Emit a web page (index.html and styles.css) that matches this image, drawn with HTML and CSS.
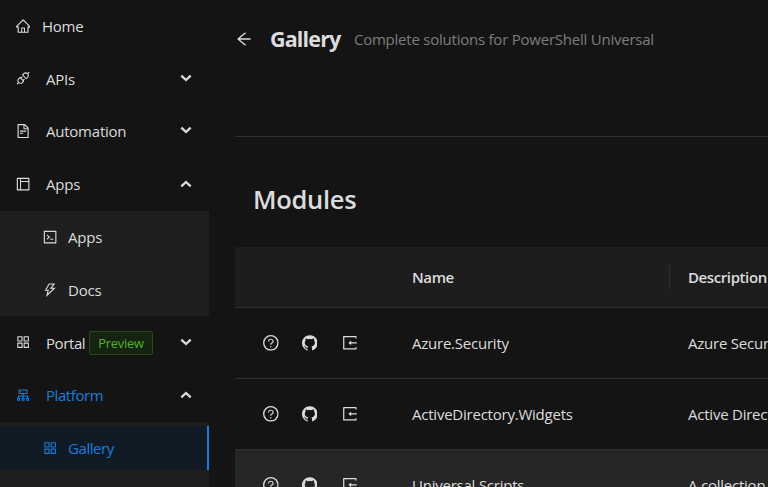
FILE: index.html
```html
<!DOCTYPE html>
<html lang="en">
<head>
<meta charset="utf-8">
<title>Gallery</title>
<link rel="stylesheet" href="styles.css">
</head>
<body>
<svg class="defs" aria-hidden="true">
  <symbol id="home" viewBox="64 64 896 896"><path d="M946.5 505L560.1 118.8l-25.9-25.9a31.5 31.5 0 00-44.4 0L77.5 505a63.9 63.9 0 00-18.8 46c.4 35.2 29.7 63.3 64.9 63.3h42.5V940h691.8V614.3h43.4c17.1 0 33.2-6.7 45.3-18.8a63.6 63.6 0 0018.7-45.3c0-17-6.7-33.1-18.8-45.2zM568 868H456V664h112v204zm217.9-325.7V868H632V640c0-22.1-17.9-40-40-40H432c-22.1 0-40 17.9-40 40v228H238.1V542.3h-96l370-369.7 23.1 23.1L882 542.3h-96.1z"/></symbol>
  <symbol id="api" viewBox="64 64 896 896"><path d="M917.7 148.8l-42.4-42.4c-1.6-1.6-3.6-2.3-5.7-2.3s-4.1.8-5.7 2.3l-76.1 76.1a199.27 199.27 0 00-112.1-34.3c-51.2 0-102.4 19.5-141.5 58.6L432.3 308.7a8.03 8.03 0 000 11.3L704 591.7c1.6 1.6 3.6 2.3 5.7 2.3 2 0 4.1-.8 5.7-2.3l101.9-101.9c68.9-69 77-175.7 24.3-253.5l76.1-76.1c3.1-3.2 3.1-8.3 0-11.4zM769.1 441.7l-59.4 59.4-186.8-186.8 59.4-59.4c24.9-24.9 58.1-38.7 93.4-38.7 35.3 0 68.4 13.7 93.4 38.7 24.9 24.9 38.7 58.1 38.7 93.4 0 35.3-13.8 68.4-38.7 93.4zm-190.2 105a8.03 8.03 0 00-11.3 0L501 613.3 410.7 523l66.7-66.7c3.1-3.1 3.1-8.2 0-11.3L441 408.6a8.03 8.03 0 00-11.3 0L363 475.3l-43-43a7.85 7.85 0 00-5.7-2.3c-2 0-4.1.8-5.7 2.3L206.8 534.2c-68.9 69-77 175.7-24.3 253.5l-76.1 76.1a8.03 8.03 0 000 11.3l42.4 42.4c1.6 1.6 3.6 2.3 5.7 2.3s4.1-.8 5.7-2.3l76.1-76.1c33.7 22.9 72.9 34.3 112.1 34.3 51.2 0 102.4-19.5 141.5-58.6l101.9-101.9c3.1-3.1 3.1-8.2 0-11.3l-43-43 66.7-66.7c3.1-3.1 3.1-8.2 0-11.3l-36.6-36.2zM441.7 769.1a131.32 131.32 0 01-93.4 38.7c-35.3 0-68.4-13.7-93.4-38.7a131.32 131.32 0 01-38.7-93.4c0-35.3 13.7-68.4 38.7-93.4l59.4-59.4 186.8 186.8-59.4 59.4z"/></symbol>
  <symbol id="file" viewBox="64 64 896 896"><path d="M854.6 288.6L639.4 73.4c-6-6-14.1-9.4-22.6-9.4H192c-17.7 0-32 14.3-32 32v832c0 17.7 14.3 32 32 32h640c17.7 0 32-14.3 32-32V311.3c0-8.5-3.4-16.7-9.4-22.7zM790.2 326H602V137.8L790.2 326zm1.8 562H232V136h302v216a42 42 0 0042 42h216v494zM504 618H320c-4.4 0-8 3.6-8 8v48c0 4.4 3.6 8 8 8h184c4.4 0 8-3.6 8-8v-48c0-4.4-3.6-8-8-8zM312 490v48c0 4.4 3.6 8 8 8h384c4.4 0 8-3.6 8-8v-48c0-4.4-3.6-8-8-8H320c-4.4 0-8 3.6-8 8z"/></symbol>
  <symbol id="layout" viewBox="64 64 896 896"><path d="M880 112H144c-17.7 0-32 14.3-32 32v736c0 17.7 14.3 32 32 32h736c17.7 0 32-14.3 32-32V144c0-17.7-14.3-32-32-32zm-696 72h136v656H184V184zm656 656H384V384h456v456zM384 320V184h456v136H384z"/></symbol>
  <symbol id="code" viewBox="64 64 896 896"><path d="M516 673c0 4.4 3.4 8 7.5 8h185c4.1 0 7.5-3.6 7.5-8v-48c0-4.4-3.4-8-7.5-8h-185c-4.1 0-7.5 3.6-7.5 8v48zm-194.9 6.1l192-161c3.8-3.2 3.8-9.1 0-12.3l-192-160.9A7.95 7.95 0 00308 351v62.7c0 2.4 1 4.6 2.9 6.1L420.7 512l-109.8 92.2a8.1 8.1 0 00-2.9 6.1V673c0 6.8 7.9 10.5 13.1 6.1z"/><rect x="148" y="148" width="728" height="728" fill="none" stroke="currentColor" stroke-width="72" stroke-linejoin="round"/></symbol>
  <symbol id="bolt" viewBox="64 64 896 896"><path d="M848 359.3H627.7L825.8 109c4.1-5.3.4-13-6.3-13H436c-2.8 0-5.5 1.5-6.9 4L170 547.5c-3.1 5.3.7 12 6.9 12h174.4l-89.4 357.6c-1.9 7.8 7.5 13.3 13.3 7.7L853.5 373c5.2-4.9 1.7-13.7-5.5-13.7zM378.2 732.5l60.3-241H281.1l189.6-327.4h224.6L487 427.4h211L378.2 732.5z"/></symbol>
  <symbol id="grid" viewBox="64 64 896 896"><path d="M178 178h268v268H178zM578 178h268v268H578zM178 578h268v268H178zM578 578h268v268H578z" fill="none" stroke="currentColor" stroke-width="68" stroke-linejoin="round"/></symbol>
  <symbol id="cluster" viewBox="64 64 896 896"><path fill-rule="evenodd" d="M888 680h-54V540H546v-92h238c8.8 0 16-7.2 16-16V168c0-8.8-7.2-16-16-16H240c-8.8 0-16 7.2-16 16v264c0 8.8 7.2 16 16 16h238v92H190v140h-54c-4.4 0-8 3.6-8 8v176c0 4.4 3.6 8 8 8h176c4.4 0 8-3.6 8-8V688c0-4.4-3.6-8-8-8h-54v-72h220v72h-54c-4.4 0-8 3.6-8 8v176c0 4.4 3.6 8 8 8h176c4.4 0 8-3.6 8-8V688c0-4.4-3.6-8-8-8h-54v-72h220v72h-54c-4.4 0-8 3.6-8 8v176c0 4.4 3.6 8 8 8h176c4.4 0 8-3.6 8-8V688c0-4.4-3.6-8-8-8zM256 805.3c0 1.5-1.2 2.7-2.7 2.7h-58.7c-1.5 0-2.7-1.2-2.7-2.7v-58.7c0-1.5 1.2-2.7 2.7-2.7h58.7c1.5 0 2.7 1.2 2.7 2.7v58.7zM288 384V216h448v168H288zM544 805.3c0 1.5-1.2 2.7-2.7 2.7h-58.7c-1.5 0-2.7-1.2-2.7-2.7v-58.7c0-1.5 1.2-2.7 2.7-2.7h58.7c1.5 0 2.7 1.2 2.7 2.7v58.7zM832 805.3c0 1.5-1.2 2.7-2.7 2.7h-58.7c-1.5 0-2.7-1.2-2.7-2.7v-58.7c0-1.5 1.2-2.7 2.7-2.7h58.7c1.5 0 2.7 1.2 2.7 2.7v58.7z"/><circle cx="360" cy="300" r="40"/></symbol>
  <symbol id="back" viewBox="64 64 896 896"><path d="M872 474H286.9l350.2-304c5.6-4.9 2.2-14-5.2-14h-88.5c-3.9 0-7.6 1.4-10.5 3.9L155 487.8a31.96 31.96 0 000 48.3L535.1 866c1.5 1.3 3.3 2 5.2 2h91.5c7.4 0 10.8-9.2 5.2-14L286.9 550H872c4.4 0 8-3.6 8-8v-60c0-4.4-3.6-8-8-8z"/></symbol>
  <symbol id="help" viewBox="64 64 896 896"><circle cx="512" cy="512" r="410" fill="none" stroke="currentColor" stroke-width="76"/><path d="M623.6 316.7C593.6 290.4 554 276 512 276s-81.6 14.5-111.6 40.7C369.2 344 352 380.7 352 420v7.6c0 4.4 3.6 8 8 8h48c4.4 0 8-3.6 8-8V420c0-44.1 43.1-80 96-80s96 35.9 96 80c0 31.1-22 59.6-56.1 72.7-21.2 8.1-39.2 22.3-52.1 40.9-13.1 19-19.9 41.8-19.9 64.9V620c0 4.4 3.6 8 8 8h48c4.4 0 8-3.6 8-8v-22.7a48.3 48.3 0 0130.9-44.8c59-22.7 97.1-74.7 97.1-132.5.1-39.3-17.1-76-48.3-103.3zM472 732a40 40 0 1080 0 40 40 0 10-80 0z"/></symbol>
  <symbol id="github" viewBox="64 64 896 896"><path d="M511.6 76.3C264.3 76.2 64 276.4 64 523.5 64 718.9 189.3 885 363.8 946c23.5 5.9 19.9-10.8 19.9-22.2v-77.5c-135.7 15.9-141.2-73.9-150.3-88.9C215 726 171.5 718 184.5 703c30.9-15.9 62.4 4 98.9 57.9 26.4 39.1 77.9 32.5 104 26 5.7-23.5 17.9-44.5 34.7-60.8-140.6-25.2-199.2-111-199.2-213 0-49.5 16.3-95 48.3-131.7-20.4-60.5 1.9-112.3 4.9-120 58.1-5.2 118.5 41.6 123.2 45.3 33-8.9 70.7-13.6 112.9-13.6 42.4 0 80.2 4.9 113.5 13.9 11.3-8.6 67.3-48.8 121.3-43.9 2.9 7.7 24.7 58.3 5.5 118 32.4 36.8 48.9 82.7 48.9 132.3 0 102.2-59 188.1-200 212.9a127.5 127.5 0 0138.1 91v112.5c.8 9 0 17.9 15 17.9 177.1-59.7 304.6-227 304.6-424.1 0-247.2-200.4-447.3-447.5-447.3z"/></symbol>
  <symbol id="import" viewBox="64 64 896 896"><path d="M888.3 757.4h-53.8c-4.2 0-7.7 3.5-7.7 7.7v61.8H197.1V197.1h629.8v61.8c0 4.2 3.5 7.7 7.7 7.7h53.8c4.2 0 7.7-3.4 7.7-7.7V158.7c0-17-13.7-30.7-30.7-30.7H158.7c-17 0-30.7 13.7-30.7 30.7v706.6c0 17 13.7 30.7 30.7 30.7h706.6c17 0 30.7-13.7 30.7-30.7V765.1c0-4.3-3.5-7.7-7.7-7.7zM902 476H588v-76c0-6.7-7.8-10.5-13-6.3l-141.9 112a8 8 0 000 12.6l141.9 112c5.3 4.2 13 .4 13-6.3v-76h314c4.4 0 8-3.6 8-8v-56c0-4.4-3.6-8-8-8z"/></symbol>
  <symbol id="down" viewBox="0 0 12 8"><path d="M1.3 1.6L6 6l4.7-4.4" fill="none" stroke="currentColor" stroke-width="2.3"/></symbol>
  <symbol id="up" viewBox="0 0 12 8"><path d="M1.3 6.4L6 2l4.7 4.4" fill="none" stroke="currentColor" stroke-width="2.3"/></symbol>
</svg>
<div class="app">
  <nav class="menu">
    <a class="item home"><svg class="icon"><use href="#home"/></svg><span>Home</span></a>
    <a class="item"><svg class="icon"><use href="#api"/></svg><span>APIs</span><svg class="arrow"><use href="#down"/></svg></a>
    <a class="item"><svg class="icon"><use href="#file"/></svg><span>Automation</span><svg class="arrow"><use href="#down"/></svg></a>
    <a class="item"><svg class="icon"><use href="#layout"/></svg><span>Apps</span><svg class="arrow up"><use href="#up"/></svg></a>
    <div class="sub">
      <a class="item"><svg class="icon"><use href="#code"/></svg><span>Apps</span></a>
      <a class="item"><svg class="icon"><use href="#bolt"/></svg><span>Docs</span></a>
    </div>
    <a class="item portal"><svg class="icon"><use href="#grid"/></svg><span>Portal</span><span class="tag">Preview</span><svg class="arrow"><use href="#down"/></svg></a>
    <a class="item open"><svg class="icon"><use href="#cluster"/></svg><span>Platform</span><svg class="arrow up"><use href="#up"/></svg></a>
    <div class="sub last">
      <a class="item selected"><svg class="icon"><use href="#grid"/></svg><span>Gallery</span></a>
    </div>
  </nav>
  <main class="main">
    <header class="head">
      <svg class="back"><use href="#back"/></svg>
      <h1>Gallery</h1>
      <p>Complete solutions for PowerShell Universal</p>
    </header>
    <h2>Modules</h2>
    <section class="table">
      <div class="row thead"><div></div><div class="name">Name</div><div class="desc">Description</div></div>
      <div class="row"><div class="actions"><svg><use href="#help"/></svg><svg><use href="#github"/></svg><svg><use href="#import"/></svg></div><div class="name">Azure.Security</div><div class="desc">Azure Security</div></div>
      <div class="row"><div class="actions"><svg><use href="#help"/></svg><svg><use href="#github"/></svg><svg><use href="#import"/></svg></div><div class="name">ActiveDirectory.Widgets</div><div class="desc">Active Directory</div></div>
      <div class="row hover"><div class="actions"><svg><use href="#help"/></svg><svg><use href="#github"/></svg><svg><use href="#import"/></svg></div><div class="name">Universal.Scripts</div><div class="desc">A collection</div></div>
    </section>
  </main>
</div>
</body>
</html>
```
FILE: styles.css
```css
* { box-sizing: border-box; }
body {
  margin: 0;
  background: #141414;
  color: #dcdcdc;
  font: 15px/24px "Open Sans", "Noto Sans", sans-serif;
  letter-spacing: -0.23px;
  overflow: hidden;
}
svg { fill: currentColor; flex: none; }
.defs { display: none; }
.app { display: flex; height: 487px; overflow: hidden; }

.menu { display: flex; flex-direction: column; flex: none; width: 209px; margin-top: -0.6px; }
.item {
  display: flex;
  align-items: center;
  flex: none;
  height: 44px;
  margin: 4.4px 0;
  padding: 0 17.5px 0 15.5px;
  white-space: nowrap;
}
.icon { width: 14.2px; height: 14.2px; margin-right: 16.3px; }
.home .icon { margin-right: 12.3px; }
.arrow { width: 12px; height: 8px; margin: -2px 0 0 auto; }
.arrow.up { margin-top: 0; }
.sub { display: flex; flex-direction: column; flex: none; background: #1f1f1f; }
.sub .item { padding-left: 42.5px; }
.sub .icon { margin-right: 11.3px; }
.sub.last { height: 80px; }
.portal { padding-top: 1px; letter-spacing: -0.4px; }
.portal .icon { margin-top: -1px; }
.open, .selected { color: #177ddc; letter-spacing: -0.42px; }
.open .arrow { color: #dcdcdc; }
.selected { background: #111b26; border-right: 2px solid #177ddc; }
.tag {
  height: 24px;
  margin: 1px 0 0 4px;
  padding: 0 8px;
  border: 1px solid #274916;
  border-radius: 2px;
  background: #162312;
  color: #52b41f;
  font-size: 12.8px;
  line-height: 23px;
  letter-spacing: -0.2px;
}

.main { flex: none; width: 640px; padding-left: 26px; }
.head {
  display: flex;
  align-items: center;
  height: 137px;
  padding-bottom: 58px;
  border-bottom: 1px solid #303030;
}
.back { width: 16px; height: 16px; margin-left: 1px; }
h1 { margin: 0 13.5px 0 18px; font-size: 21.5px; line-height: 34px; font-weight: 700; letter-spacing: -0.85px; }
.head p { margin: 0; color: #7d7d7d; }
h2 { margin: 43px 0 29px 18px; font-size: 25.5px; line-height: 38px; font-weight: 600; letter-spacing: -0.3px; }
.row {
  display: grid;
  grid-template-columns: 160px 275px 1fr;
  align-items: center;
  height: 71px;
  border-bottom: 1px solid #303030;
  white-space: nowrap;
}
.thead { height: 61px; background: #1d1d1d; font-weight: 600; letter-spacing: -0.4px; }
.name { padding-left: 17px; }
.desc { padding-left: 18px; }
.thead .name { border-right: 1px solid #303030; }
.actions { display: flex; align-items: center; padding-left: 28px; gap: 23px; }
.actions svg { width: 15.7px; height: 15.7px; }
.actions svg:last-child { margin-left: 1.5px; }
.hover { background: #262626; }
```
